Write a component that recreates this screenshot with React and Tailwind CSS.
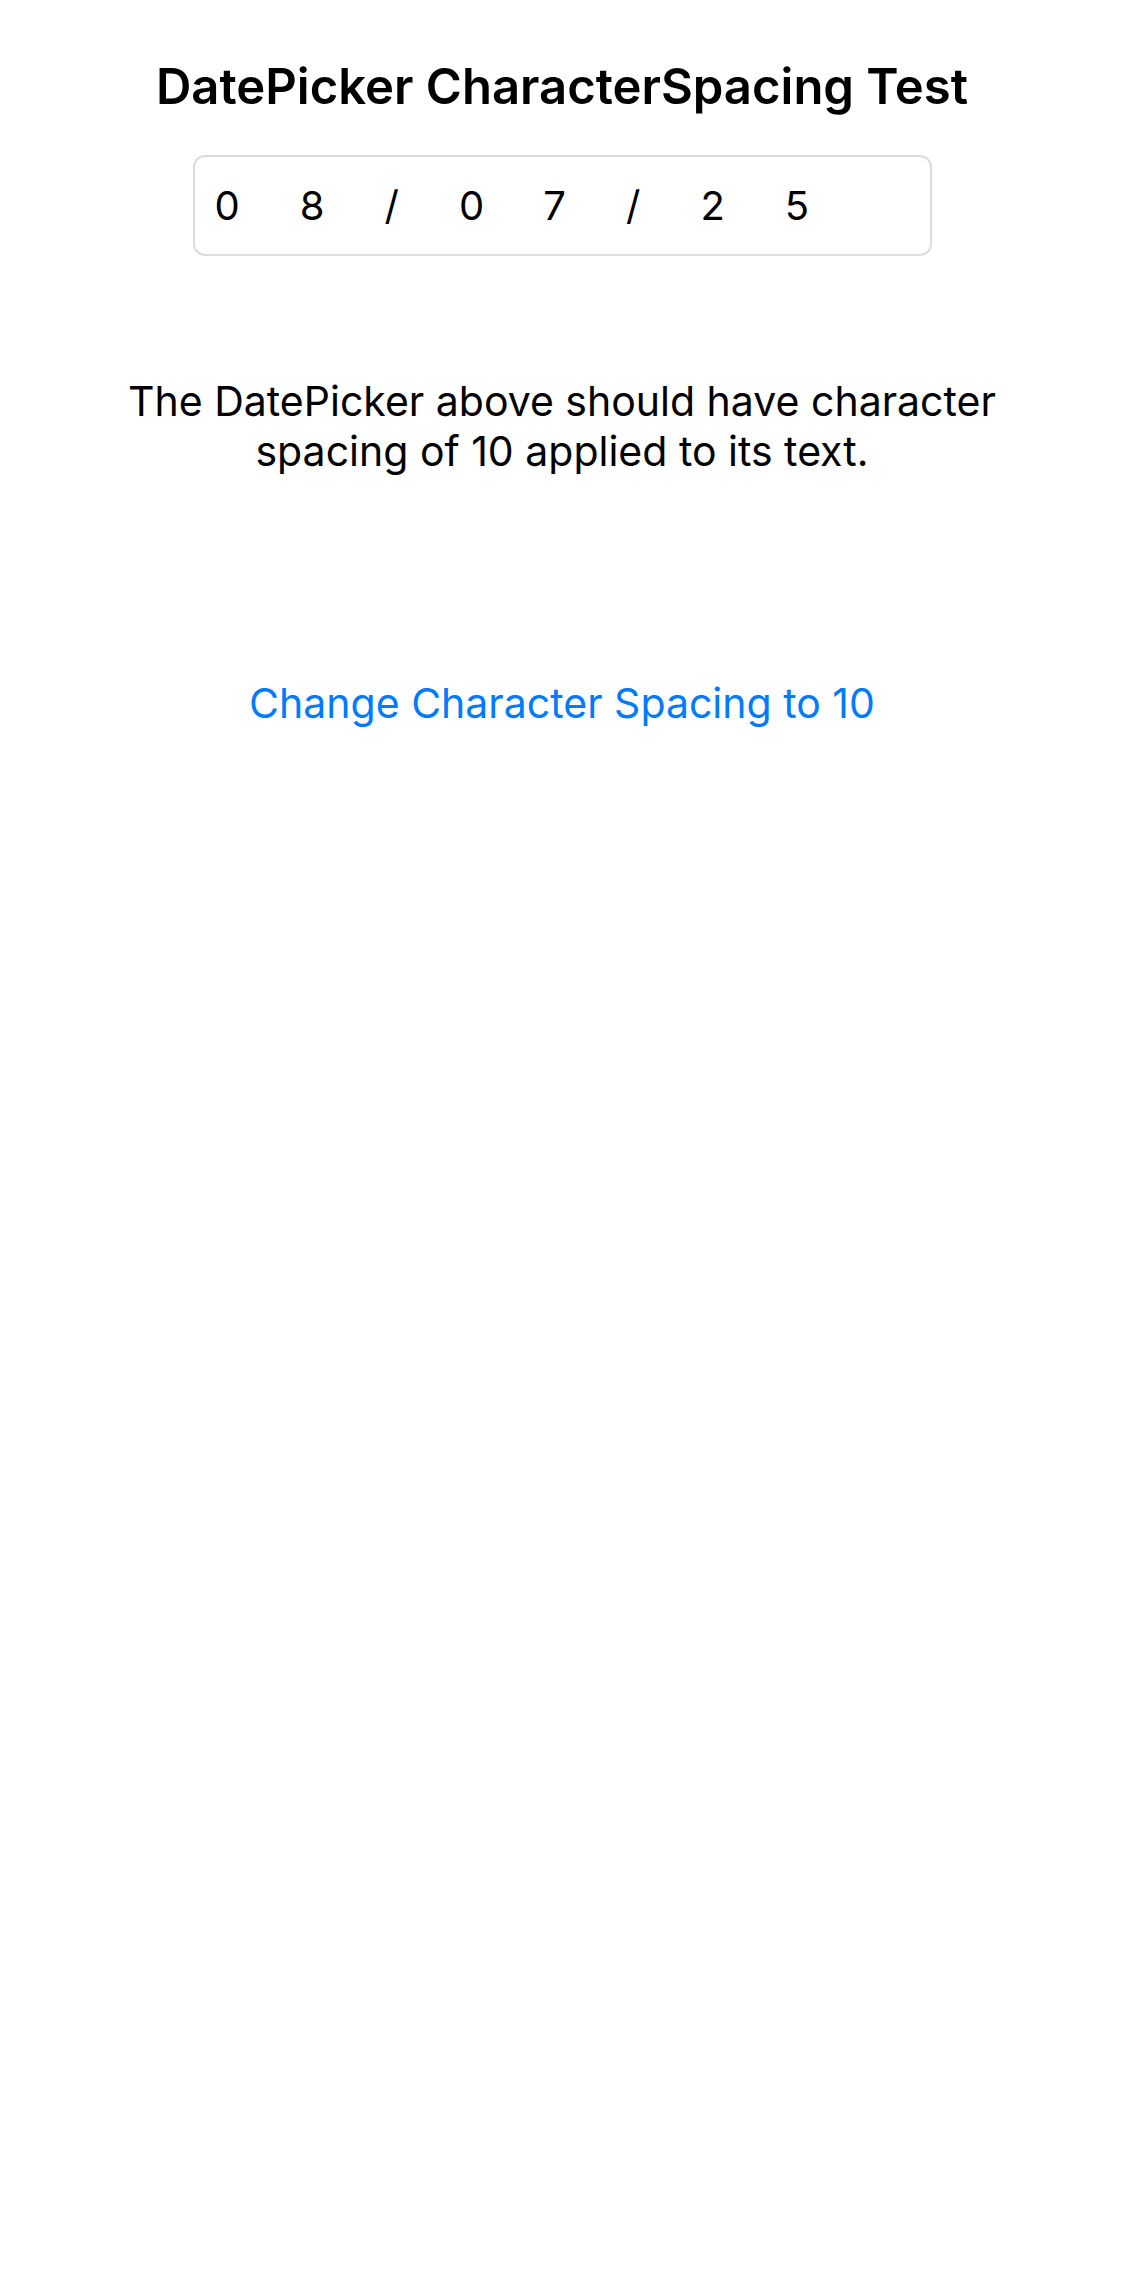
export default function App() {
  return (
    <div className="min-h-[2286px] w-full bg-white flex flex-col items-center" style={{ fontFamily: "Inter, 'Noto Sans', sans-serif" }}>
      <h1 className="mt-[57px] text-[49px] leading-[60px] font-semibold text-black whitespace-nowrap">
        DatePicker CharacterSpacing Test
      </h1>
      <div className="mt-[38px] w-[739px] h-[101px] border-2 border-[#dcdce0] rounded-[12px] flex items-center pl-[20px]">
        <span className="text-[40px] leading-none text-black tracking-[60px] whitespace-pre">08/07/25</span>
      </div>
      <p className="mt-[120px] w-[900px] text-center text-[41px] leading-[50px] text-black">
        The DatePicker above should have character spacing of 10 applied to its text.
      </p>
      <button className="mt-[202px] text-[41px] leading-[50px] text-[#007aff]">
        Change Character Spacing to 10
      </button>
    </div>
  );
}
